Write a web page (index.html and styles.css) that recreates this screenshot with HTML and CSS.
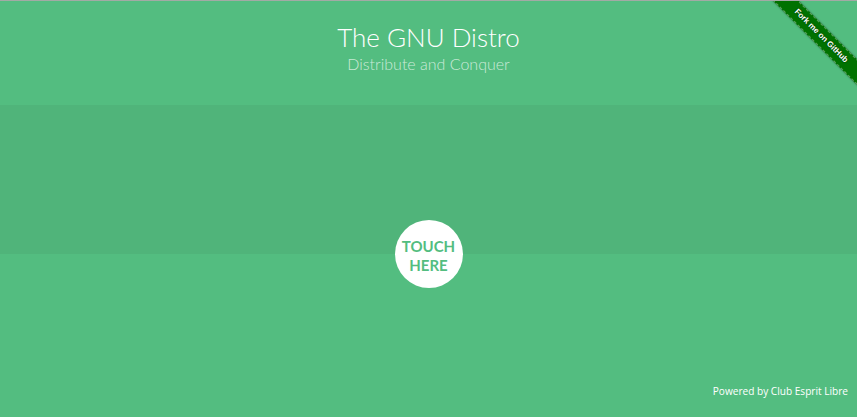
FILE: index.html
```html
<!DOCTYPE html>
<html>
<head>
<meta charset="utf-8">
<title>The GNU Distro</title>
<link rel="stylesheet" href="styles.css">
</head>
<body>
<div class="page">
  <header class="header">
    <h1 class="title">The GNU Distro</h1>
    <p class="subtitle">Distribute and Conquer</p>
  </header>
  <section class="band"></section>
  <div class="touch-row">
    <button class="touch">TOUCH<br>HERE</button>
  </div>
  <footer class="footer">Powered by Club Esprit Libre</footer>
</div>
<div class="ribbon"><a class="ribbon-band" href="#">Fork me on GitHub</a></div>
</body>
</html>
```
FILE: styles.css
```css
html, body {
  margin: 0;
  padding: 0;
  height: 100%;
}
body {
  background: #53bd80;
  border-top: 1px solid #a3aaa5;
  box-sizing: border-box;
  overflow: hidden;
  font-family: Lato, "Liberation Sans", sans-serif;
}
.page {
  display: flex;
  flex-direction: column;
  height: 100%;
}
.header {
  height: 104px;
  display: flex;
  flex-direction: column;
  align-items: center;
  color: #fff;
}
.title {
  margin: 20px 0 0;
  font-weight: 300;
  font-size: 26px;
  line-height: 32px;
}
.subtitle {
  margin: 0;
  font-weight: 300;
  font-size: 16px;
  line-height: 22px;
  color: rgba(255,255,255,0.7);
}
.band {
  height: 149px;
  background: #50b47a;
}
.touch-row {
  display: flex;
  justify-content: center;
  margin-top: -34px;
}
.touch {
  width: 68px;
  height: 68px;
  border-radius: 50%;
  border: none;
  background: #fff;
  color: #53bd80;
  font-family: Lato, "Liberation Sans", sans-serif;
  font-weight: 700;
  font-size: 15px;
  line-height: 19px;
  padding: 3px 0 0;
}
.footer {
  margin-top: auto;
  margin-bottom: 19px;
  align-self: flex-end;
  margin-right: 9px;
  font-family: "Open Sans", sans-serif;
  font-size: 10.1px;
  line-height: 14px;
  color: #fff;
}
.ribbon {
  position: absolute;
  top: 1px;
  right: 0;
  width: 100px;
  height: 100px;
  overflow: hidden;
}
.ribbon-band {
  position: absolute;
  left: -6px;
  top: 26px;
  width: 140px;
  height: 18px;
  box-sizing: border-box;
  transform: rotate(45deg);
  background: #007200;
  border-top: 1px dashed rgba(255,255,255,0.35);
  border-bottom: 1px dashed rgba(255,255,255,0.35);
  box-shadow: 0 0 2px rgba(0,0,0,0.5);
  color: #fff;
  text-decoration: none;
  text-align: center;
  font-family: "Liberation Sans", sans-serif;
  font-weight: 700;
  font-size: 8px;
  line-height: 16px;
  text-shadow: 0 0 2px rgba(0,0,0,0.6);
}
```
